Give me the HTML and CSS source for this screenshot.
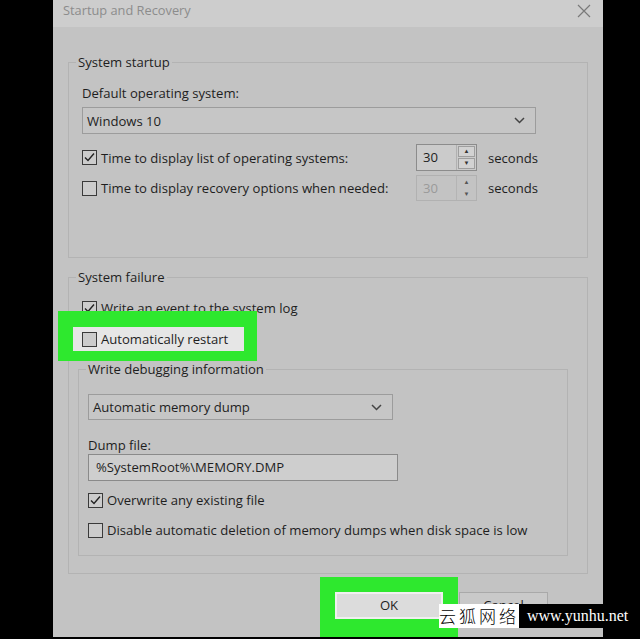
FILE: index.html
```html
<!DOCTYPE html>
<html>
<head>
<meta charset="utf-8">
<link rel="stylesheet" href="styles.css">
</head>
<body>
<div class="screen">
  <div class="dialog">
    <div class="titlebar">
      <span class="title">Startup and Recovery</span>
      <svg class="close" width="14" height="14" viewBox="0 0 14 14"><path d="M1 1L13 13M13 1L1 13" stroke="#7a7a7a" stroke-width="1.2" fill="none"/></svg>
    </div>
    <div class="content">
      <fieldset class="group startup">
        <legend>System startup</legend>
        <div class="label">Default operating system:</div>
        <div class="select os"><span>Windows 10</span><svg class="chev" width="11" height="7" viewBox="0 0 11 7"><path d="M1 1L5.5 5.5L10 1" stroke="#444" stroke-width="1.5" fill="none"/></svg></div>
        <div class="timerow first">
          <div class="check"><span class="box"><svg width="13" height="13" viewBox="0 0 13 13"><path d="M2 6.5L5 9.5L11 2.5" stroke="#222" stroke-width="1.4" fill="none"/></svg></span>Time to display list of operating systems:</div>
          <div class="spin"><span class="val">30</span><span class="arrows"><span class="arr up">&#9650;</span><span class="arr down">&#9660;</span></span></div>
          <span class="unit">seconds</span>
        </div>
        <div class="timerow second">
          <div class="check"><span class="box"></span>Time to display recovery options when needed:</div>
          <div class="spin disabled"><span class="val">30</span><span class="arrows"><span class="arr up">&#9650;</span><span class="arr down">&#9660;</span></span></div>
          <span class="unit">seconds</span>
        </div>
      </fieldset>

      <fieldset class="group failure">
        <legend>System failure</legend>
        <div class="check row"><span class="box"><svg width="13" height="13" viewBox="0 0 13 13"><path d="M2 6.5L5 9.5L11 2.5" stroke="#222" stroke-width="1.4" fill="none"/></svg></span>Write an event to the system log</div>
        <div class="highlight-row">
          <div class="check lit"><span class="box"></span>Automatically restart</div>
        </div>
        <fieldset class="group debug">
          <legend>Write debugging information</legend>
          <div class="select dump"><span>Automatic memory dump</span><svg class="chev" width="11" height="7" viewBox="0 0 11 7"><path d="M1 1L5.5 5.5L10 1" stroke="#444" stroke-width="1.5" fill="none"/></svg></div>
          <div class="label dumplabel">Dump file:</div>
          <div class="textbox">%SystemRoot%\MEMORY.DMP</div>
          <div class="check row over"><span class="box"><svg width="13" height="13" viewBox="0 0 13 13"><path d="M2 6.5L5 9.5L11 2.5" stroke="#222" stroke-width="1.4" fill="none"/></svg></span>Overwrite any existing file</div>
          <div class="check row dis"><span class="box"></span>Disable automatic deletion of memory dumps when disk space is low</div>
        </fieldset>
      </fieldset>

      <div class="buttons">
        <div class="okwrap"><div class="btn ok">OK</div></div>
        <div class="btn cancel">Cancel</div>
      </div>
    </div>
  </div>
  <div class="watermark"><span class="wm-cn">云狐网络</span><span class="wm-en">www.yunhu.net</span></div>
</div>
</body>
</html>
```

FILE: styles.css
```css
* { box-sizing: border-box; }
html, body { margin: 0; padding: 0; background: #000; }
body { width: 640px; height: 639px; overflow: hidden; font-family: "Open Sans", "Noto Sans", sans-serif; font-size: 13.1px; color: #1e1e1e; }
.screen { position: relative; width: 640px; height: 639px; padding-left: 53px; }
.dialog { width: 550px; height: 637px; background: #c3c3c3; display: flex; flex-direction: column; overflow: hidden; }
.titlebar { height: 27px; flex: none; background: #cdcdcd; display: flex; align-items: center; justify-content: space-between; padding: 0 12px 7px 10px; }
.title { color: #8c8c8c; font-size: 12.8px; }
.close { margin-top: 2px; }
.content { padding: 26px 15px 0 15px; display: flex; flex-direction: column; }
.group { margin: 0; border: 1px solid #b3b3b3; min-width: 0; }
.group legend { padding: 0 2px; line-height: 18px; height: 18px; }
.startup { padding: 13px 0 56px 13px; width: 520px; }
.startup > legend { margin-left: -6px; }
.label { line-height: 18px; height: 18px; }
.select { height: 27px; border: 1px solid #9c9c9c; background: #c6c6c6; display: flex; align-items: center; justify-content: space-between; padding: 0 10px 0 4px; }
.select.os { margin-top: 5px; width: 454px; }
.timerow { display: grid; grid-template-columns: 323px 61px auto; column-gap: 11px; align-items: center; height: 27px; }
.timerow.first { margin-top: 10px; }
.timerow.second { margin-top: 4px; height: 26px; }
.timerow.second .spin { height: 26px; }
.check { display: flex; align-items: center; white-space: nowrap; }
.box { width: 15px; height: 15px; border: 1px solid #3a3a3a; background: #cccccc; margin-right: 4px; display: flex; align-items: center; justify-content: center; flex: none; }
.spin { height: 27px; border: 1px solid #8c8c8c; background: #cbcbcb; display: flex; justify-content: space-between; }
.spin .val { padding: 3px 0 0 6px; line-height: 18px; }
.arrows { width: 20px; display: flex; flex-direction: column; border-left: 1px solid #b0b0b0; padding: 1px; gap: 1px; }
.arr { flex: 1; background: #d2d2d2; border: 1px solid #9e9e9e; font-size: 6px; line-height: 9px; text-align: center; color: #333; }
.spin.disabled { border-color: #b1b1b1; background: #c3c3c3; }
.spin.disabled .val { color: #9a9a9a; }
.spin.disabled .arr { background: #c3c3c3; border-color: transparent; color: #555; }
.spin.disabled .arrows { border-left-color: #b4b4b4; }
.unit { line-height: 18px; }
.failure { margin-top: 10px; padding: 12px 0 0 9px; width: 520px; }
.failure > legend { margin-left: -2px; }
.row { height: 20px; margin-left: 4px; }
.highlight-row { position: relative; margin-top: 11px; height: 20px; }
.highlight-row::before { content: ""; position: absolute; left: -20px; top: -16px; width: 199px; height: 50px; background: #2ee82e; z-index: 1; }
.check.lit { position: relative; z-index: 2; width: 171px; height: 24px; margin-top: -2px; background: #e6e6e6; padding-left: 9px; margin-left: -5px; }
.debug { margin: 13px 19px 17px 0; padding: 16px 0 15px 9px; width: 490px; }
.debug > legend { margin-left: -2px; }
.select.dump { width: 305px; height: 26px; }
.dumplabel { margin-top: 16px; }
.textbox { width: 310px; height: 27px; border: 1px solid #8a8a8a; background: #cecece; padding: 3px 0 0 7px; line-height: 18px; }
.debug .row { margin-left: 0; }
.over { margin-top: 9px; }
.dis { margin-top: 10px; }
.buttons { display: flex; justify-content: flex-end; padding-right: 40px; margin-top: 3px; align-items: flex-start; }
.okwrap { background: #2ee82e; width: 138px; height: 60px; padding: 15px 0 0 15px; margin-right: 1px; }
.btn { height: 27px; line-height: 25px; text-align: center; border: 1px solid #a9a9a9; }
.ok { width: 108px; background: #dcdcdc; border: 2px solid #f0f0f0; line-height: 23px; }
.cancel { width: 89px; margin-top: 15px; background: #c9c9c9; }
.watermark { position: absolute; left: 439px; top: 604px; display: flex; height: 24px; z-index: 5; }
.wm-cn { background: #fff; color: #000; width: 80px; font-family: "Noto Sans CJK SC", sans-serif; font-size: 17px; line-height: 24px; text-align: center; letter-spacing: 3px; font-weight: 300; }
.wm-en { background: #000; color: #fff; width: 121px; font-family: "Liberation Serif", serif; font-size: 16px; line-height: 24px; padding-left: 8px; }
```
